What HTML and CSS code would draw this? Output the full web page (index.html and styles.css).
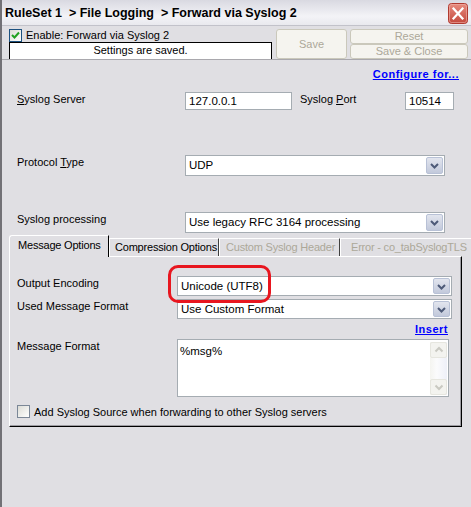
FILE: index.html
```html
<!DOCTYPE html>
<html lang="en">
<head>
<meta charset="UTF-8">
<title>Forward via Syslog 2</title>
<link rel="stylesheet" href="styles.css">
</head>
<body>

<div class="window">
    <div class="titlebar">
        <span class="title">RuleSet 1 &nbsp;&gt; File Logging &nbsp;&gt; Forward via Syslog 2</span>
        <span class="close-btn">
            <svg width="20" height="21" viewBox="0 0 20 21">
                <defs>
                    <linearGradient id="red" x1="0" y1="0" x2="0" y2="1">
                        <stop offset="0" stop-color="#e88d80"/>
                        <stop offset="1" stop-color="#c3483c"/>
                    </linearGradient>
                </defs>
                <rect x="0.5" y="0.5" width="19" height="20" rx="3" fill="url(#red)" stroke="#b03a30"/>
                <rect x="1.5" y="1.5" width="17" height="18" rx="2" fill="none" stroke="#f0b0a8" stroke-opacity="0.6"/>
                <path d="M5.5 5.5 L14.5 15.5 M14.5 5.5 L5.5 15.5" stroke="#fff" stroke-width="2.2" stroke-linecap="square"/>
            </svg>
        </span>
    </div>

    <div class="toolbar">
        <div class="toolbar-left">
            <div class="check-row">
                <span class="checkbox checked">
                    <svg width="11" height="11" viewBox="0 0 11 11"><path d="M2 5 L4.5 7.5 L9 2.5" fill="none" stroke="#21a121" stroke-width="2"/></svg>
                </span>
                <span>Enable: Forward via Syslog 2</span>
            </div>
            <div class="status">Settings are saved.</div>
        </div>
        <button class="btn btn-save" disabled>Save</button>
        <div class="btn-stack">
            <button class="btn" disabled>Reset</button>
            <button class="btn" disabled>Save &amp; Close</button>
        </div>
    </div>

    <div class="main">
        <div class="link-row"><a href="#" class="link">Configure for...</a></div>

        <div class="form-row row-server">
            <div class="label"><u>S</u>yslog Server</div>
            <div class="field field-server">127.0.0.1</div>
            <div class="label label-port">Syslog <u>P</u>ort</div>
            <div class="field field-port">10514</div>
        </div>

        <div class="form-row row-protocol">
            <div class="label">Protocol <u>T</u>ype</div>
            <div class="select">
                <span class="select-text">UDP</span>
                <span class="drop-btn"><svg width="15" height="15" viewBox="0 0 15 15"><path d="M4 6 L7.5 9.5 L11 6" fill="none" stroke="#4d5a78" stroke-width="2"/></svg></span>
            </div>
        </div>

        <div class="form-row row-processing">
            <div class="label">Syslog processing</div>
            <div class="select">
                <span class="select-text">Use legacy RFC 3164 processing</span>
                <span class="drop-btn"><svg width="15" height="15" viewBox="0 0 15 15"><path d="M4 6 L7.5 9.5 L11 6" fill="none" stroke="#4d5a78" stroke-width="2"/></svg></span>
            </div>
        </div>

        <div class="tabs">
            <div class="tab active">Message Options</div>
            <div class="tab tab-compression">Compression Options</div>
            <div class="tab tab-custom disabled">Custom Syslog Header</div>
            <div class="tab tab-error disabled">Error - co_tabSyslogTLS</div>
        </div>

        <div class="panel">
            <div class="panel-row">
                <div class="label panel-label">Output Encoding</div>
                <div class="select select-wide">
                    <span class="select-text">Unicode (UTF8)</span>
                    <span class="drop-btn"><svg width="15" height="15" viewBox="0 0 15 15"><path d="M4 6 L7.5 9.5 L11 6" fill="none" stroke="#4d5a78" stroke-width="2"/></svg></span>
                </div>
            </div>
            <div class="panel-row row-format">
                <div class="label panel-label">Used Message Format</div>
                <div class="select select-wide">
                    <span class="select-text">Use Custom Format</span>
                    <span class="drop-btn"><svg width="15" height="15" viewBox="0 0 15 15"><path d="M4 6 L7.5 9.5 L11 6" fill="none" stroke="#4d5a78" stroke-width="2"/></svg></span>
                </div>
            </div>
            <div class="insert-row"><a href="#" class="link">Insert</a></div>
            <div class="panel-row">
                <div class="label panel-label">Message Format</div>
                <div class="textarea">
                    <span class="textarea-text">%msg%</span>
                    <div class="scrollbar">
                        <span class="scroll-btn"><svg width="14" height="14" viewBox="0 0 14 14"><path d="M3.5 8.5 L7 5 L10.5 8.5" fill="none" stroke="#c9c9c2" stroke-width="2"/></svg></span>
                        <span class="scroll-btn"><svg width="14" height="14" viewBox="0 0 14 14"><path d="M3.5 5.5 L7 9 L10.5 5.5" fill="none" stroke="#c9c9c2" stroke-width="2"/></svg></span>
                    </div>
                </div>
            </div>
            <div class="check-row bottom-check">
                <span class="checkbox"></span>
                <span>Add Syslog Source when forwarding to other Syslog servers</span>
            </div>

            <!-- red marker drawn over the encoding box -->
            <div class="highlight"></div>
        </div>
    </div>
</div>

</body>
</html>
```

FILE: styles.css
```css
* {
    box-sizing: border-box;
}
body {
    margin: 0;
    font-family: "Liberation Sans", Arial, sans-serif;
    font-size: 11px;
    color: #000;
    background-color: #e0dfe3;
}
.window {
    width: 471px;
    height: 507px;
    border-left: 2px solid #727176;
    overflow: hidden;
}
.titlebar {
    height: 26px;
    display: flex;
    align-items: center;
    justify-content: space-between;
    padding: 0 3px 0 3px;
    background: linear-gradient(#d9d9e1, #f3f3f7 65%, #e9e9ee);
    border-bottom: 1px solid #c2c2ca;
}
.title {
    font-weight: bold;
    font-size: 12.5px;
}
.close-btn {
    display: flex;
    margin-top: 1px;
}
.toolbar {
    display: flex;
    height: 34px;
    padding: 2px 0 0 7px;
    border-bottom: 1px solid #a9a8ad;
}
.toolbar-left {
    width: 263px;
}
.check-row {
    display: flex;
    align-items: center;
    height: 14px;
    gap: 4px;
}
.checkbox {
    width: 13px;
    height: 13px;
    border: 1px solid #1c5180;
    background: linear-gradient(135deg, #dcdcd6, #ffffff);
    display: flex;
    align-items: center;
    justify-content: center;
}
.status {
    height: 17px;
    border: 1px solid #000;
    border-bottom: none;
    background-color: #fff;
    text-align: center;
    line-height: 15px;
}
.btn {
    font-family: "Liberation Sans", Arial, sans-serif;
    font-size: 11px;
    color: #aca899;
    background-color: #f5f4ef;
    border: 1px solid #cac8bb;
    border-radius: 3px;
    padding: 0;
}
.btn-save {
    width: 71px;
    height: 30px;
    margin: 1px 0 0 4px;
}
.btn-stack {
    width: 118px;
    margin: 1px 0 0 3px;
    display: flex;
    flex-direction: column;
}
.btn-stack .btn {
    height: 15px;
    line-height: 13px;
}
.main {
    padding: 7px 12px 0 7px;
}
.link-row {
    text-align: right;
    line-height: 14px;
    height: 14px;
}
.link {
    color: #0000ff;
    font-weight: bold;
    text-decoration: underline;
    letter-spacing: 0.5px;
}
.form-row {
    display: flex;
    align-items: flex-start;
    padding-left: 8px;
}
.label {
    width: 168px;
    line-height: 14px;
    flex-shrink: 0;
}
.row-server {
    margin-top: 11px;
}
.row-protocol {
    margin-top: 45px;
}
.row-processing {
    margin-top: 36px;
}
.field {
    height: 18px;
    border: 1px solid #a5acb2;
    background-color: #fff;
    padding-left: 3px;
    line-height: 16px;
    font-size: 11.5px;
}
.field-server {
    width: 107px;
}
.label-port {
    width: 105px;
    margin-left: 8px;
}
.field-port {
    width: 49px;
}
.select {
    display: flex;
    justify-content: space-between;
    width: 260px;
    height: 21px;
    border: 1px solid #a5acb2;
    background-color: #fff;
}
.select-text {
    padding-left: 3px;
    line-height: 19px;
    font-size: 11.5px;
}
.drop-btn {
    width: 17px;
    margin: 1px;
    border: 1px solid #b8c1d6;
    border-radius: 2px;
    background: linear-gradient(#e2e5ee, #c2c9db);
    display: flex;
    align-items: center;
    justify-content: center;
}
.tabs {
    display: flex;
    align-items: flex-end;
    height: 21px;
    margin-top: 2px;
}
.tab {
    flex-shrink: 0;
    height: 18px;
    padding-left: 8px;
    line-height: 16px;
    white-space: nowrap;
    overflow: hidden;
    letter-spacing: -0.2px;
    border-top: 1px solid #fff;
    border-left: 1px solid #fff;
    border-right: 1px solid #404040;
}
.tab.active {
    width: 100px;
    height: 22px;
    margin-bottom: -1px;
    padding-top: 1px;
    border-right-color: #000;
    border-top-left-radius: 3px;
    background-color: #e0dfe3;
    position: relative;
    z-index: 1;
}
.tab-compression {
    width: 110px;
    padding-left: 5px;
}
.tab-custom {
    width: 121px;
    padding-left: 6px;
}
.tab-error {
    width: 150px;
    padding-left: 10px;
    border-right: none;
}
.tab.disabled {
    color: #aca899;
}
.panel {
    position: relative;
    width: 453px;
    height: 171px;
    padding: 19px 0 0 7px;
    border-top: 1px solid #fff;
    border-left: 1px solid #fff;
    border-right: 1px solid #000;
    border-bottom: 1px solid #000;
    box-shadow: inset -1px -1px 0 #9d9ca1;
}
.panel-row {
    display: flex;
    align-items: flex-start;
}
.panel-label {
    width: 160px;
}
.row-format {
    margin-top: 3px;
}
.select-wide {
    width: 275px;
    height: 20px;
}
.select-wide .select-text {
    line-height: 18px;
}
.insert-row {
    margin-top: 3px;
    text-align: right;
    line-height: 14px;
    height: 14px;
    padding-right: 13px;
}
.panel-row + .insert-row + .panel-row {
    margin-top: 3px;
}
.textarea {
    display: flex;
    justify-content: space-between;
    width: 272px;
    height: 58px;
    border: 1px solid #a5acb2;
    background-color: #fff;
}
.textarea-text {
    padding: 4px 0 0 2px;
    line-height: 14px;
    font-size: 11.5px;
}
.scrollbar {
    width: 17px;
    margin: 2px 1px 1px 0;
    display: flex;
    flex-direction: column;
    justify-content: space-between;
    background: linear-gradient(90deg, #f4f4f0, #fbfbfc 40%, #eef0f8);
}
.scroll-btn {
    height: 16px;
    border: 1px solid #e6e6df;
    border-radius: 2px;
    background-color: #f3f3ef;
    display: flex;
    align-items: center;
    justify-content: center;
}
.bottom-check {
    margin-top: 8px;
    height: 13px;
}
.bottom-check .checkbox {
    border-color: #7b8797;
}
.highlight {
    position: absolute;
    left: 158px;
    top: 8px;
    width: 103px;
    height: 38px;
    border: 3px solid #e8161f;
    border-radius: 10px;
}
```
